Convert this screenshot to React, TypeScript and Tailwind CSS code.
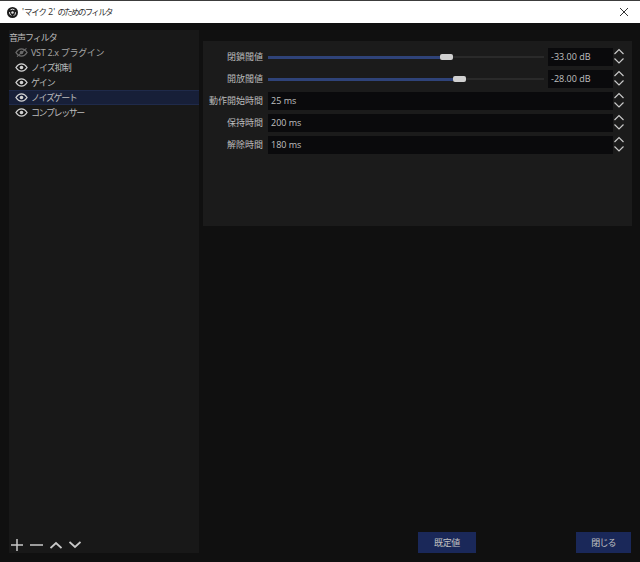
const font = "font-['Open_Sans','Noto_Sans_CJK_JP',sans-serif]"

function Eye({ off }: { off?: boolean }) {
  return (
    <svg width="13" height="9" viewBox="0 0 14 10" className="shrink-0">
      <path
        d="M0.8 5C2.6 2.2 4.6 1 7 1s4.4 1.2 6.2 4C11.4 7.8 9.4 9 7 9S2.6 7.8 0.8 5Z"
        fill="none"
        stroke={off ? "#6b6b6b" : "#d2d2d2"}
        strokeWidth="1.4"
      />
      <circle cx="7" cy="5" r="2" fill={off ? "#6b6b6b" : "#d2d2d2"} />
      {off && <path d="M2 9.5 12.5 0.5" stroke="#6b6b6b" strokeWidth="1.2" />}
    </svg>
  )
}

function Spin() {
  return (
    <svg width="12" height="18" viewBox="0 0 12 18" className="shrink-0">
      <path d="M1.5 6 6 1.5 10.5 6M1.5 10.5 6 15l4.5-4.5" fill="none" stroke="#c8c8c8" strokeWidth="1.2" />
    </svg>
  )
}

function Slider({ label, pct, value }: { label: string; pct: number; value: string }) {
  return (
    <div className="flex items-center h-[18px]">
      <div className="w-[60px] text-right text-[#bcbcbc]">{label}</div>
      <div className="w-[276px] ml-[5px] h-[13px] relative flex items-center">
        <div className="w-full h-[2px] bg-[#2a2a2a]" />
        <div className="absolute left-0 h-[3px] bg-[#2f4379]" style={{ width: pct }} />
        <div
          className="absolute w-[13px] h-[6px] rounded-[2px] bg-[#d0d0d0]"
          style={{ left: pct }}
        />
      </div>
      <div className="w-[65px] h-[18px] ml-[4px] bg-[#0a0a0c] pl-[3px] leading-[18px] text-[#c0c0c0]">{value}</div>
      <Spin />
    </div>
  )
}

function Field({ label, value }: { label: string; value: string }) {
  return (
    <div className="flex items-center h-[18px]">
      <div className="w-[60px] text-right text-[#bcbcbc] whitespace-nowrap">{label}</div>
      <div className="w-[345px] h-[18px] ml-[5px] bg-[#0a0a0c] pl-[3px] leading-[18px] text-[#c0c0c0]">{value}</div>
      <Spin />
    </div>
  )
}

const filters = [
  { name: "VST 2.x プラグイン", off: true, tracking: "tracking-[-0.3px]" },
  { name: "ノイズ抑制", tracking: "tracking-[-1px]" },
  { name: "ゲイン", tracking: "tracking-[-1px]" },
  { name: "ノイズゲート", selected: true, tracking: "tracking-[-1.4px]" },
  { name: "コンプレッサー", tracking: "tracking-[-1.4px]" },
]

export default function App() {
  return (
    <div className={`w-[640px] h-[562px] overflow-hidden flex flex-col bg-[#101010] text-[9px] ${font}`}>
      <div className="h-[23px] shrink-0 bg-white border-t border-[#3c3c3c] flex items-center pl-[7px] pr-[11px] text-[#333]">
        <svg width="11" height="11" viewBox="0 0 22 22" className="mr-[4px]">
          <circle cx="11" cy="11" r="11" fill="#1c1c1c" />
          <path d="M7 5.5Q11 3 15 5.5M17 10.5Q17.500 15 13.500 17.500M8.500 17Q4.500 14.500 5 10" fill="none" stroke="#e6e6e6" strokeWidth="2" />
          <circle cx="11" cy="11" r="2.400" fill="#e6e6e6" />
        </svg>
        <span className="whitespace-pre">
          '<span className="text-[8.5px] tracking-[-1.200px]">マイク</span> 2'{" "}
          <span className="text-[8.5px] tracking-[-1.700px]">のためのフィルタ</span>
        </span>
        <svg width="10" height="10" viewBox="0 0 10 10" className="ml-auto">
          <path d="M1 1l8 8M9 1l-8 8" stroke="#333" strokeWidth="1" />
        </svg>
      </div>

      <div className="flex-1 flex pl-[9px] pt-[7px] pb-[9px] gap-[4px]">
        <div className="w-[190px] bg-[#181818] flex flex-col">
          <div className="h-[15px] leading-[15px] text-[#bcbcbc] tracking-[-1px]">音声フィルタ</div>
          <div className="flex flex-col">
            {filters.map((f) => (
              <div
                key={f.name}
                className={`h-[15px] flex items-center pl-[6px] gap-[3px] ${
                  f.selected ? "bg-[#171f38] border-y border-[#1f2a4a]" : ""
                } ${f.off ? "text-[#a8a8a8]" : "text-[#bcbcbc]"}`}
              >
                <Eye off={f.off} />
                <span className={`whitespace-nowrap ${f.tracking}`}>{f.name}</span>
              </div>
            ))}
          </div>
          <div className="mt-auto h-[16px] flex items-center pl-[2px] gap-[7px]">
            <svg width="12" height="12" viewBox="0 0 12 12"><path d="M6 0v12M0 6h12" stroke="#c8c8c8" strokeWidth="1.5" /></svg>
            <svg width="13" height="12" viewBox="0 0 13 12"><path d="M0 6h13" stroke="#c8c8c8" strokeWidth="1.5" /></svg>
            <svg width="12" height="12" viewBox="0 0 12 12"><path d="M0.500 9 6 4l5.500 5" fill="none" stroke="#c8c8c8" strokeWidth="1.8" /></svg>
            <svg width="12" height="12" viewBox="0 0 12 12"><path d="M0.500 3 6 8l5.500-5" fill="none" stroke="#c8c8c8" strokeWidth="1.8" /></svg>
          </div>
        </div>

        <div className="flex flex-col flex-1 pr-[8px]">
          <div className="mt-[11px] h-[185px] bg-[#1b1b1b] pt-[7px] flex flex-col gap-[4px]">
            <Slider label="閉鎖閾値" pct={172} value="-33.00 dB" />
            <Slider label="開放閾値" pct={185} value="-28.00 dB" />
            <Field label="動作開始時間" value="25 ms" />
            <Field label="保持時間" value="200 ms" />
            <Field label="解除時間" value="180 ms" />
          </div>
          <div className="mt-auto flex h-[21px]">
            <button className="ml-[215px] w-[58px] bg-[#1a2859] text-[#c0c0c0] tracking-[-0.4px]">既定値</button>
            <button className="ml-[100px] w-[55px] bg-[#1a2859] text-[#c0c0c0] tracking-[-0.8px]">閉じる</button>
          </div>
        </div>
      </div>
    </div>
  )
}
